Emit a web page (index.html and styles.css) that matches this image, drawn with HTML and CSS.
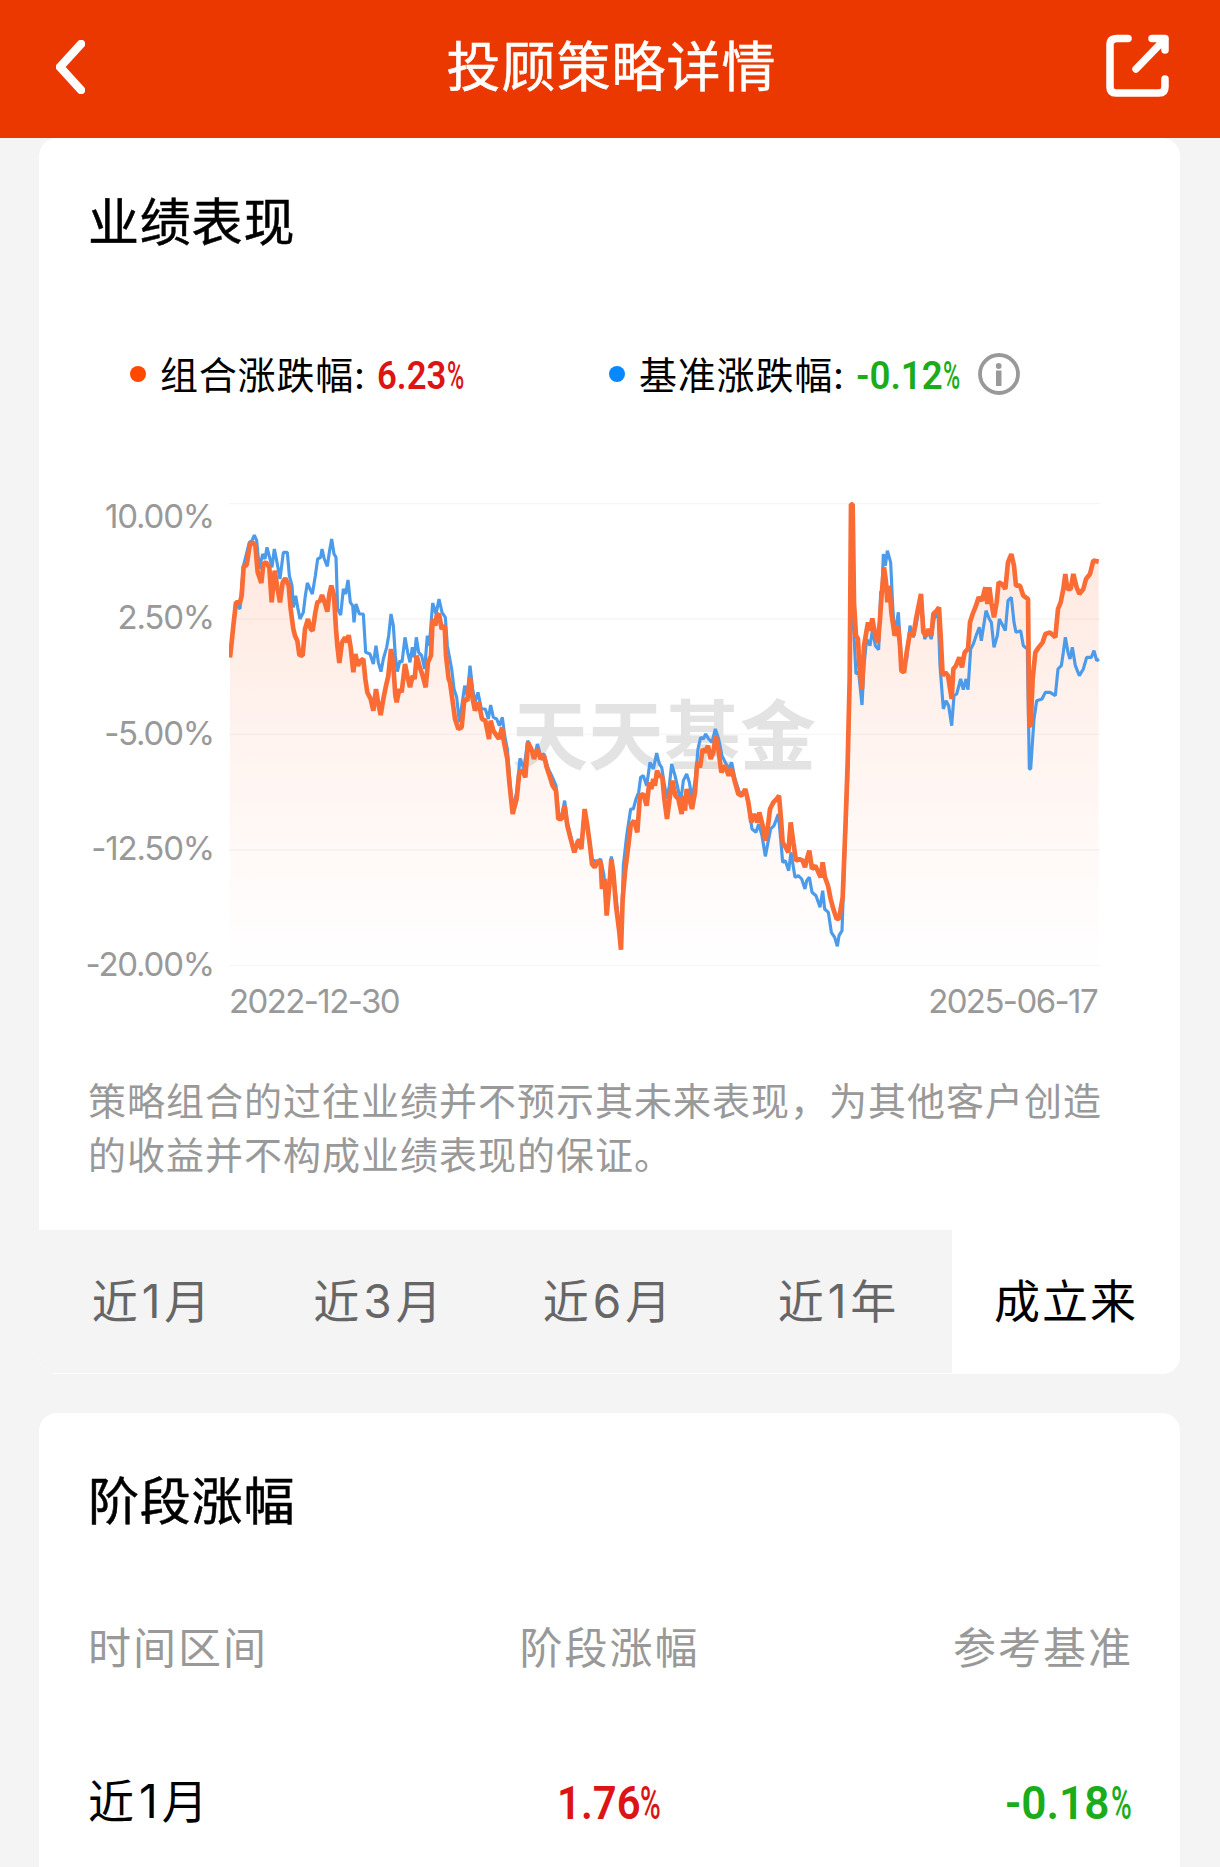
FILE: index.html
```html
<!DOCTYPE html>
<html lang="zh-CN">
<head>
<meta charset="utf-8">
<title>投顾策略详情</title>
<link rel="stylesheet" href="styles.css">
</head>
<body>
<header class="topbar">
  <svg class="back" width="29" height="54" viewBox="0 0 29 54"><path d="M25 4 4 27l21 23"/></svg>
  <h1>投顾策略详情</h1>
  <svg class="share" width="64" height="64" viewBox="0 0 64 64"><path d="M22 4.500H11Q4 4.500 4 11V53Q4 59 10 59H53Q59 59 59 53V45M46 4.500H59V16M59 5 30 35"/></svg>
</header>
<main>
  <section class="card performance">
    <h2>业绩表现</h2>
    <div class="legend">
      <div class="legend-item"><i class="dot dot-orange"></i><span class="name">组合涨跌幅:</span><span class="num up n-port"><b>6.23</b><em>%</em></span></div>
      <div class="legend-item"><i class="dot dot-blue"></i><span class="name">基准涨跌幅:</span><span class="num down n-base"><b>-0.12</b><em>%</em></span>
        <svg class="info" width="42" height="42" viewBox="0 0 42 42"><circle cx="21" cy="21" r="19"/><path d="M18 17.500h5.500V33H18z"/><circle class="pip" cx="20.700" cy="13" r="2.900"/></svg>
      </div>
    </div>
    <div class="chart">
      <div class="y-axis"><span>10.00%</span><span>2.50%</span><span>-5.00%</span><span>-12.50%</span><span>-20.00%</span></div>
      <div class="plot">
        <svg width="875" height="466" viewBox="447 69 2625 1398">
          <defs><linearGradient id="fill" x1="0" y1="72" x2="0" y2="1460" gradientUnits="userSpaceOnUse"><stop offset="0" stop-color="#ff6b35" stop-opacity=".17"/><stop offset=".5" stop-color="#ff6b35" stop-opacity=".08"/><stop offset="1" stop-color="#ff6b35" stop-opacity="0"/></linearGradient></defs>
          <path class="grid" d="M447 74H3060M447 420H3060M447 766H3060M447 1113H3060M447 1459H3060"/>
          <text class="watermark" x="1296" y="856" textLength="912">天天基金</text>
          <path id="area" fill="url(#fill)"/>
          <path id="base" class="line-base"/>
          <path id="port" class="line-port"/>
        </svg>
        <div class="dates"><span>2022-12-30</span><span>2025-06-17</span></div>
      </div>
    </div>
    <p class="note">策略组合的过往业绩并不预示其未来表现，为其他客户创造的收益并不构成业绩表现的保证。</p>
    <nav class="tabs"><a>近<span>1</span>月</a><a>近<span>3</span>月</a><a>近<span>6</span>月</a><a>近<span>1</span>年</a><a class="active">成立来</a></nav>
  </section>
  <section class="card returns">
    <h2>阶段涨幅</h2>
    <div class="row head"><span>时间区间</span><span>阶段涨幅</span><span>参考基准</span></div>
    <div class="row"><span class="period">近<i>1</i>月</span><span class="num up n-month"><b>1.76</b><em>%</em></span><span class="num down n-ref"><b>-0.18</b><em>%</em></span></div>
  </section>
</main>
<script src="chart.js"></script>
</body>
</html>
```
FILE: styles.css
```css
* { box-sizing: border-box; }
body { margin: 0; width: 1220px; height: 1867px; overflow: hidden; background: #f4f4f4; color: #000; font-family: Inter, "Noto Sans CJK SC", sans-serif; }
h1, h2, p { margin: 0; font-weight: 400; }
i, em { font-style: normal; }
.topbar { height: 138px; background: #ea3800; color: #fff; display: flex; align-items: flex-start; justify-content: space-between; padding: 36px 50px 0 56px; }
.topbar svg { fill: none; stroke: #fff; stroke-width: 7.500; stroke-linecap: round; stroke-linejoin: round; }
.topbar .back { margin-top: 4px; stroke-width: 8.500; }
.topbar .share { margin-top: -2px; }
.topbar h1 { font-size: 54px; line-height: 64px; letter-spacing: 1px; margin-left: 32px; -webkit-text-stroke: .5px #fff; }
.card { width: 1141px; margin-left: 39px; background: #fff; border-radius: 18px; overflow: hidden; }
.performance { height: 1236px; display: flex; flex-direction: column; }
.card h2 { font-size: 51px; line-height: 60px; letter-spacing: .8px; padding-left: 49px; -webkit-text-stroke: .5px #000; }
.performance h2 { margin-top: 55px; }
.legend { display: flex; height: 50px; margin-top: 96px; padding-left: 91px; }
.legend-item { display: flex; align-items: center; width: 479px; }
.dot { width: 16px; height: 16px; border-radius: 50%; margin-right: 14px; }
.dot-orange { background: #ff4800; }
.dot-blue { background: #0888ff; }
.name { font-size: 38px; letter-spacing: .8px; line-height: 50px; width: 217px; padding-top: 2px; white-space: nowrap; }
.num { display: inline-flex; font-family: Roboto, sans-serif; font-size: 39px; line-height: 50px; padding-top: 3px; white-space: nowrap; }
.num b { font-weight: 600; transform-origin: left; transform: scaleX(.89); }
.num em { font-weight: 500; transform-origin: left; transform: scaleX(.6); }
.up { color: #dc1414; }
.down { color: #1aac1a; }
.n-port, .n-base { width: 86px; }
.n-port b { width: 70px; }
.n-base { width: 104px; }
.n-base b { width: 87px; transform: scaleX(.94); }
.info { margin-left: 18px; fill: #999; flex: none; }
.info circle { fill: none; stroke: #999; stroke-width: 3.800; }
.info .pip { fill: #999; stroke: none; }
.chart { display: flex; margin-top: 103px; height: 520px; color: #999; font-size: 33px; line-height: 40px; letter-spacing: -1.2px; }
.y-axis { width: 175px; display: flex; flex-direction: column; text-align: right; margin: -6px 15px 0 0; }
.y-axis span { flex: none; height: 115.500px; }
.y-axis span:first-child { height: 101px; }
.plot { width: 875px; }
.plot svg { display: block; }
.grid { fill: none; stroke: #f6f6f6; stroke-width: 4; }
.watermark { font: 700 228px "Noto Sans CJK SC", sans-serif; fill: #e3e3e3; letter-spacing: 0; }
.line-base, .line-port { fill: none; stroke-linejoin: bevel; }
.line-base { stroke: #4c9bea; stroke-width: 9.500; }
.line-port { stroke: #fb6b34; stroke-width: 14; }
.dates { display: flex; justify-content: space-between; width: 868px; margin-top: 13px; letter-spacing: -1.600px; }
.note { color: #999; font-size: 38px; letter-spacing: 1px; line-height: 54px; margin: 52px 40px 0 49px; }
.tabs { display: grid; grid-template-columns: 226px 227px 232px 228px 228px; height: 143px; margin-top: auto; margin-bottom: 1px; }
.tabs a { background: #f4f4f4; color: #666; font-size: 46px; letter-spacing: 2px; line-height: 142px; text-align: center; }
.tabs span { margin: 0 2px; }
.tabs .active { background: #fff; color: #000; }
.returns { margin-top: 39px; height: 480px; padding-top: 59px; }
.row { display: grid; grid-template-columns: 1fr 1fr 1fr; padding: 0 49px; font-size: 46px; line-height: 64px; margin-top: 89px; }
.row > :nth-child(2) { justify-self: center; }
.row > :nth-child(3) { justify-self: end; }
.head { margin-top: 84px; color: #999; font-size: 43px; letter-spacing: 2px; }
.head > :nth-child(3) { margin-right: -2px; }
.period { letter-spacing: 2px; }
.period i { margin: 0 2px 0 3px; }
.row .num { font-size: 47px; line-height: 64px; padding-top: 2px; }
.n-month { width: 104px; }
.n-month b { width: 83px; }
.n-ref { width: 126px; }
.row .n-ref b { width: 106px; }
.n-ref b { transform: scaleX(.94); }
```
FILE: chart.js
```js
// Each segment is [x offset, y offset, "x,y x,y ..."].
const port = [
  [0, 0, "450,535 455,490 460,440 468,370 480,370 485,350 491,262 500,258 510,195 518,190 526,200 533,280 540,300 544,312 550,255 558,250 568,265 575,370 584,275 592,325 600,370 608,310 616,298 626,320 632,390 640,450 645,470 652,485 658,528 668,530 675,450 684,420 692,450 698,455 706,400 712,370 720,365 726,348 734,370 742,398 748,345 754,320 762,350 768,450 772,500 778,552 786,490 795,475 802,490 806,468 812,505 820,580 826,525 834,560 842,545 850,540 856,600 862,640 872,660 880,695 888,630 894,670 902,708 910,660 918,620 925,590 933,510 940,560 946,650 950,670 958,630 965,640 975,555 982,590 990,625 998,590 1004,600 1010,530 1018,560 1028,590 1037,625 1044,550 1053,530 1058,420 1066,440 1070,410 1077,405 1085,450 1094,440 1098,530 1106,600"],
  [1020, 480, "90,130 97,180 105,240 115,270 125,265 133,180 142,185 150,115 158,180 165,215 176,190 186,240 196,245 207,300 212,245 220,275 230,290 237,300 246,265 252,310 262,360 268,430 278,525 290,480 298,400 308,395 316,415 324,310 334,330 342,360 352,330 362,360 372,350 380,385 390,415 398,440 408,455 415,540 425,540 434,500 442,560 452,600 463,640 474,605 484,630 494,510 502,560 510,620 516,675 524,685 534,665 542,670 546,750 554,720 560,830 568,740 574,660 580,700 588,800 598,880 603,932 608,780 615,700 625,620 632,560 642,545 652,580 660,470 670,465 680,500 688,430 694,450 700,420 705,440 711,395 718,410 727,415 733,480 741,540 750,470 757,425 766,470 775,480 785,525 790,470 795,515 800,450 808,480 816,510 825,460 832,370 840,385 848,330 856,340 864,320 872,360 880,340 887,290 895,330 904,400 915,380 926,410 935,390 945,430 955,465 965,470 976,450 985,490 994,550 1002,525 1012,550 1018,520 1028,560 1036,605 1044,560 1050,510 1060,490 1070,480 1077,470 1083,540 1088,610 1097,625 1105,640 1112,550 1120,610 1128,665 1138,660 1148,665 1155,685 1162,655 1168,635 1176,690 1186,680 1195,700 1202,715 1208,670 1215,715 1224,740 1232,780 1240,810 1250,840 1258,838"],
  [2160, 0, "122,1290 128,1256 137,1023 143,850 149,600 153,76 158,76 162,370 168,470 174,480 178,560 186,630 192,500 198,465 204,430 210,455 217,418 226,470 234,490 240,420 244,360 252,265 258,310 262,370 268,320 274,400 284,470 294,440 300,500 304,575 312,580 320,520 330,460 340,470 348,420 363,345 370,460 378,470 386,450 394,470 400,405 410,395 417,385 422,470 428,590 436,580 444,590 455,660 460,570 468,560 478,535 486,565 494,520 504,510 510,430 518,405 528,380 536,355 546,365 556,325 562,375 568,325 574,370 582,415 590,370 596,310 606,315 616,330 624,250 634,225 642,260 648,320 660,320 670,350 684,360 688,740 692,740 698,600 706,520 716,505 728,490 736,465 750,460 766,475 774,390 782,370 790,330 796,285 802,330 812,330 820,285 830,325 838,345 850,330 858,300 870,285 880,245 896,248"]
];
const base = [
  [0, 0, "450,535 460,440 468,375 480,390 490,262 508,190 516,185 523,168 530,185 538,270 548,225 555,240 561,205 570,240 576,265 583,210 590,245 600,300 610,220 622,220 628,290 636,320 640,385 647,350 653,385 660,420 670,400 676,350 682,312 690,330 697,345 706,290 713,240 722,235 726,210 733,240 742,262 748,220 755,180 762,225 768,235 773,390 782,408 790,330 797,345 804,303 811,370 818,380 822,430 828,375 838,405 850,405 857,520 870,525 880,555 888,500 895,550 903,578 910,540 920,505 926,470 933,405 940,440 946,530 952,578 960,545 966,550 975,475 983,520 990,550 997,505 1003,535 1009,475 1016,520 1025,530 1034,570 1042,470 1048,500 1058,372 1068,405 1077,360 1086,400 1096,415 1102,500 1115,570 1122,630"],
  [1020, 480, "110,175 118,250 127,190 134,140 142,170 150,80 158,150 165,190 174,160 184,210 196,210 205,240 212,198 220,235 230,240 238,260 247,235 254,290 262,330 270,430 278,510 290,460 300,358 312,390 323,305 335,335 345,345 352,315 362,350 372,345 385,390 395,410 408,440 416,530 425,530 434,485 442,550 463,635 475,600 484,625 493,515 510,610 516,660 530,670 542,660 552,710 560,820 574,652 590,790 603,925 610,680 620,590 632,510 640,510 648,480 656,460 662,415 670,410 680,440 690,370 700,390 710,342 718,375 725,385 732,430 741,480 748,440 755,375 765,410 772,440 782,490 790,425 800,405 808,430 816,480 826,420 834,330 842,295 850,300 857,285 866,300 876,310 886,270 896,300 906,350 916,370 926,390 935,370 945,420 960,465 976,455 986,500 996,570 1008,580 1016,555 1026,590 1036,652 1044,610 1052,570 1062,560 1075,525 1082,600 1088,670 1096,665 1106,695 1113,640 1125,715 1135,710 1145,720 1155,750 1160,725 1168,715 1176,760 1188,770 1200,805 1208,755 1214,810 1225,820 1234,880 1244,895 1252,922 1257,890"],
  [2160, 0, "126,1355 134,1130 143,900 149,600 154,300 160,430 168,585 176,580 186,678 192,560 200,480 210,500 218,450 226,500 236,512 242,340 246,335 250,225 256,260 262,215 272,250 278,380 284,470 295,400 302,510 308,570 320,540 330,440 340,475 350,430 363,350 374,480 385,460 394,480 402,420 414,395 420,560 430,690 438,665 446,680 455,740 462,650 470,645 482,600 490,632 498,600 504,632 512,510 520,495 530,465 538,445 544,485 558,395 568,420 574,430 582,505 592,470 598,420 606,435 616,455 624,365 634,355 642,430 648,460 662,455 670,500 682,510 688,870 692,870 702,720 710,665 726,660 736,640 750,640 766,650 774,570 784,560 790,520 796,475 804,520 810,540 817,505 826,560 838,590 850,570 860,535 874,535 882,515 890,545 897,540"]
];
const points = series => series.flatMap(([dx, dy, s]) =>
  s.split(" ").map(p => { const [x, y] = p.split(",").map(Number); return (x + dx) + " " + (y + dy); }));
const line = series => "M" + points(series).join("L");
document.getElementById("port").setAttribute("d", line(port));
document.getElementById("base").setAttribute("d", line(base));
document.getElementById("area").setAttribute("d", line(port) + "L3056 1459H449Z");
```
